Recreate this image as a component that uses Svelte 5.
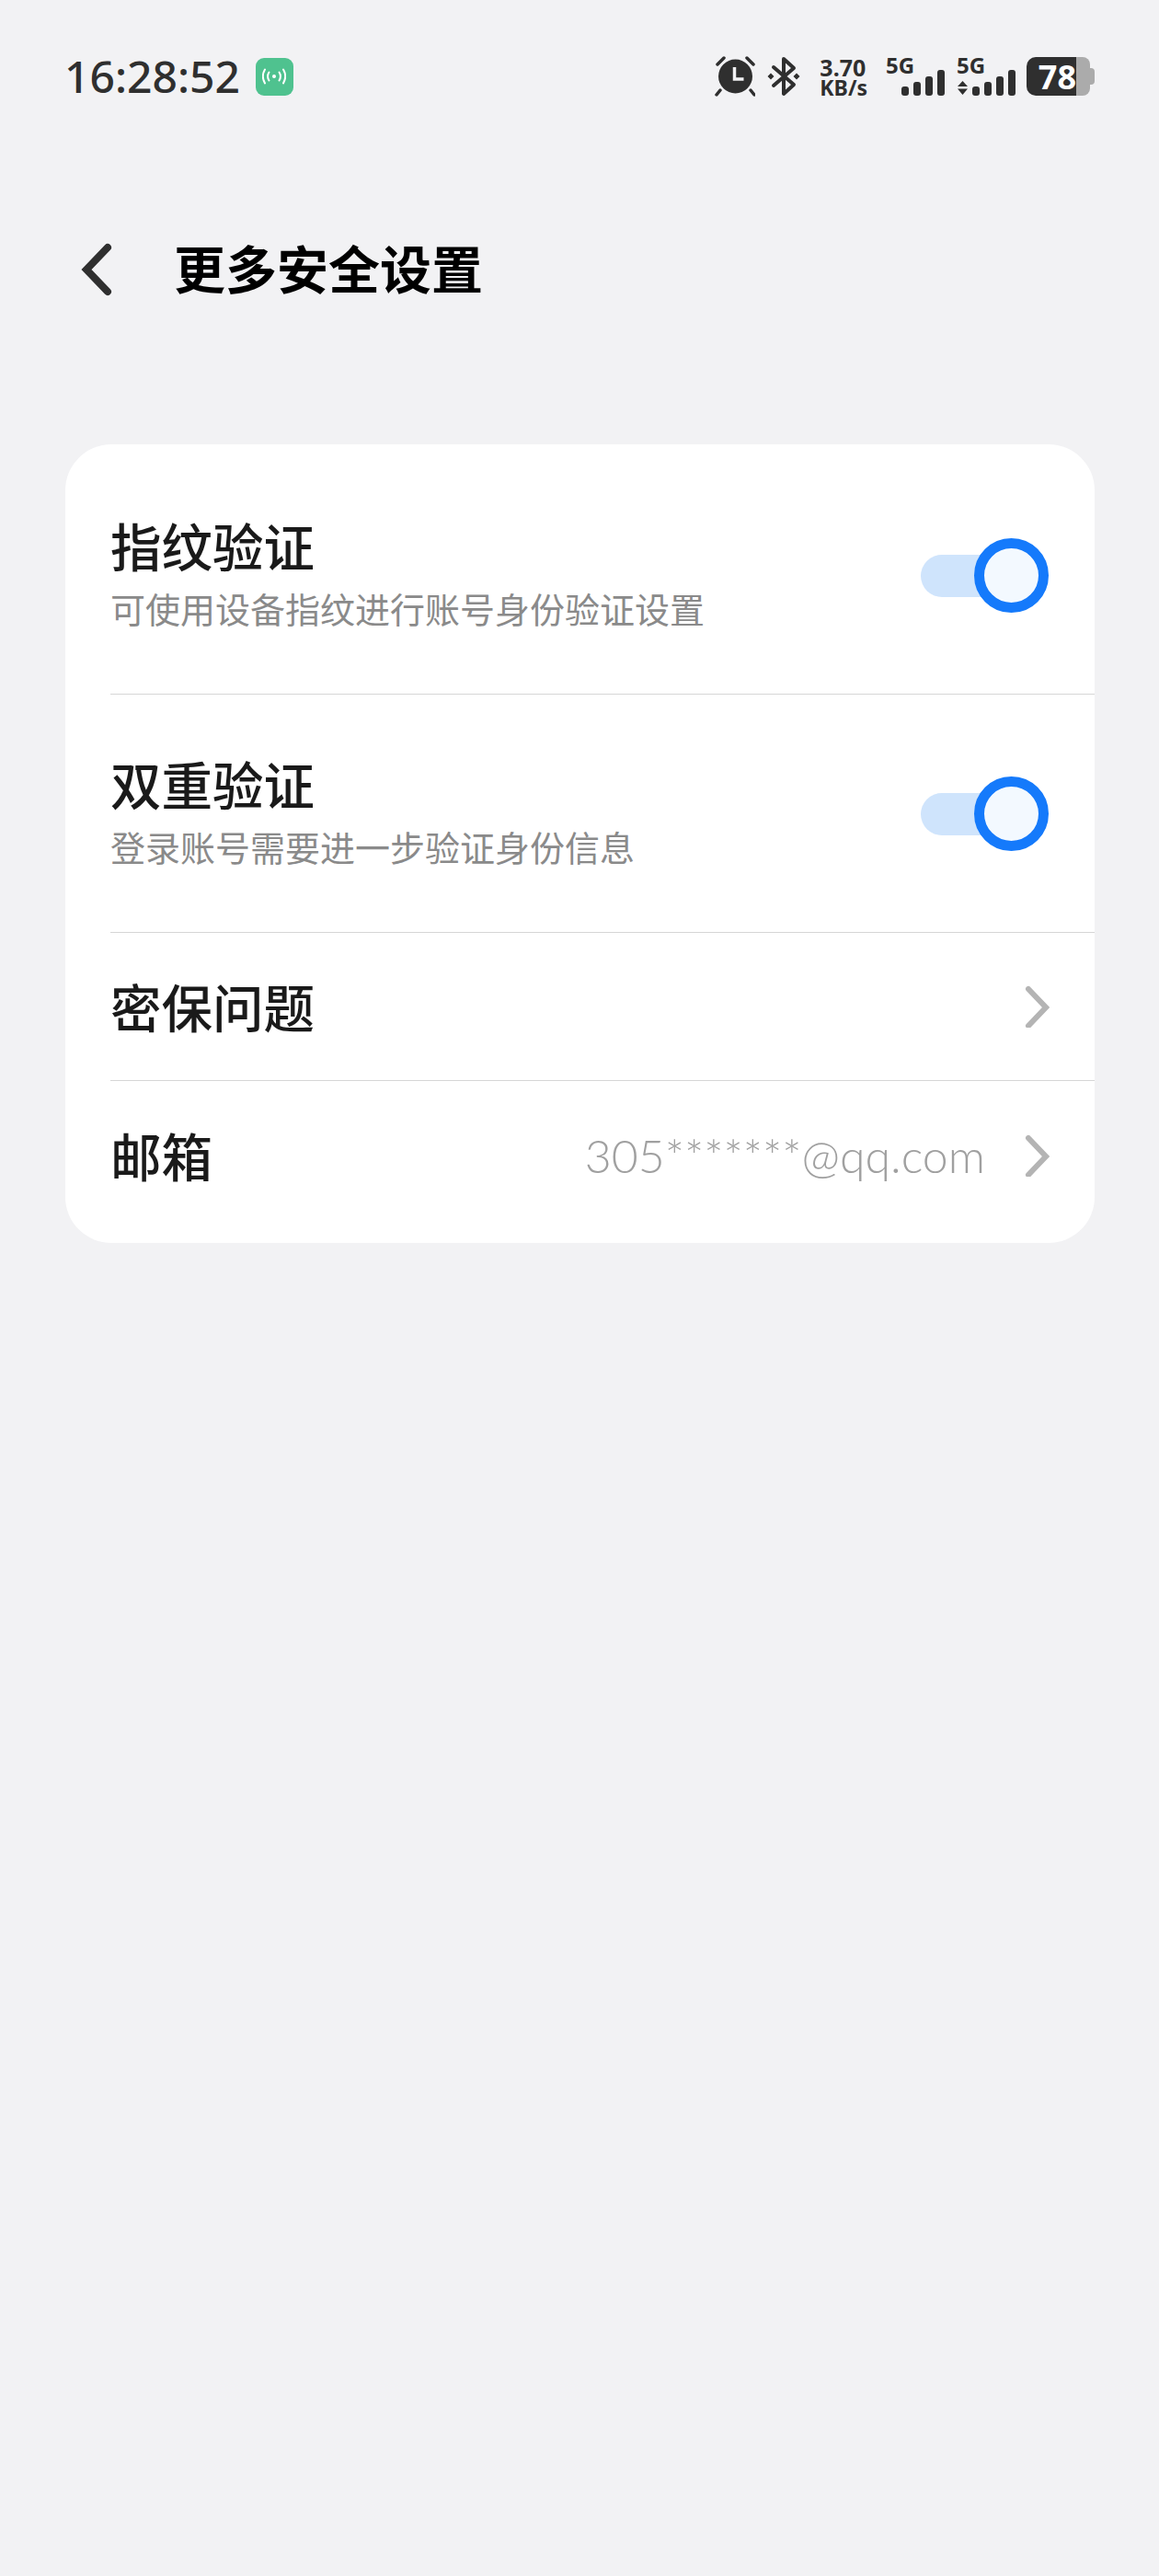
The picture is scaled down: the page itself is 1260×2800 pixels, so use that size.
<script>
  // signal bar heights, tallest last
  const barHeights = [10, 15, 21, 28];

  const rows = [
    { title: "指纹验证", sub: "可使用设备指纹进行账号身份验证设置", toggle: true },
    { title: "双重验证", sub: "登录账号需要进一步验证身份信息", toggle: true },
    { title: "密保问题" },
    { title: "邮箱", value: "305*******@qq.com" }
  ];
</script>

<div class="page">
  <div class="status">
    <span class="time">16:28:52</span>
    <span class="hotspot">
      <svg width="26" height="18" viewBox="0 0 26 18" fill="none" stroke="#fff" stroke-width="2" stroke-linecap="round">
        <circle cx="13" cy="9" r="2" fill="#fff" stroke="none" />
        <path d="M7.500 4.500c-1.800 2.800-1.800 6.200 0 9M18.500 4.500c1.800 2.800 1.800 6.200 0 9" />
        <path d="M3 1.500c-2.800 4.800-2.800 10.200 0 15M23 1.500c2.800 4.800 2.800 10.200 0 15" />
      </svg>
    </span>

    <div class="status-right">
      <svg class="alarm" width="44" height="44" viewBox="0 0 44 44">
        <circle cx="22.500" cy="22" r="18.500" fill="#2f2f2f" />
        <path d="M21.500 12v13h10" fill="none" stroke="#f2f2f4" stroke-width="3.500" />
        <path d="M3 9l7-7M42 9l-7-7M6 37l-4 5M39 37l4 5" fill="none" stroke="#2f2f2f" stroke-width="3.500" stroke-linecap="round" />
      </svg>

      <svg class="bt" width="36" height="44" viewBox="0 0 36 44" fill="#2f2f2f">
        <path d="M7 12 29 31 18 41V3l11 10L7 32" fill="none" stroke="#2f2f2f" stroke-width="4" stroke-linejoin="round" stroke-linecap="round" />
        <path d="M4 18.500 7.500 22 4 25.500 .5 22zM32 18.500 35.500 22 32 25.500 28.500 22z" />
      </svg>

      <div class="speed">
        <span class="speed-num">3.70</span>
        <span class="speed-unit">KB/s</span>
      </div>

      <div class="signal first">
        <span class="net">5G</span>
        <div class="bars">
          {#each barHeights as h}
            <i style="height: {h}px"></i>
          {/each}
        </div>
      </div>

      <div class="signal second">
        <span class="net">5G</span>
        <svg class="updown" width="11" height="15" viewBox="0 0 11 15" fill="#2f2f2f">
          <path d="M5.500 0 11 6H0zM0 8.500h11L5.500 15z" />
        </svg>
        <div class="bars">
          {#each barHeights as h}
            <i style="height: {h}px"></i>
          {/each}
        </div>
      </div>

      <div class="battery">
        <div class="battery-fill"><span>78</span></div>
        <div class="battery-rest"></div>
        <div class="battery-nub"></div>
      </div>
    </div>
  </div>

  <header class="header">
    <svg width="36" height="58" viewBox="0 0 36 58" fill="none" stroke="#2f2f2f" stroke-width="8" stroke-linecap="round" stroke-linejoin="miter">
      <path d="M30 5 7 29l23 24" />
    </svg>
    <h1>更多安全设置</h1>
  </header>

  <section class="card">
    {#each rows as row}
      <div class="row" class:tall={row.toggle}>
        <div class="row-text">
          <div class="row-title">{row.title}</div>
          {#if row.sub}
            <div class="row-sub">{row.sub}</div>
          {/if}
        </div>

        {#if row.toggle}
          <div class="switch"><div class="knob"></div></div>
        {:else}
          {#if row.value}
            <span class="row-value">{row.value}</span>
          {/if}
          <svg class="chevron" width="28" height="46" viewBox="0 -1 28 46" fill="none" stroke="#b4b4b4" stroke-width="6" stroke-linecap="round">
            <path d="M5 3l19 20L5 43" />
          </svg>
        {/if}
      </div>
    {/each}
  </section>
</div>

<style>
  :global(body) {
    margin: 0;
    background: #f2f2f4;
  }

  .page {
    min-height: 2800px;
    background: #f2f2f4;
    font-family: "Noto Sans CJK SC", "Noto Sans", sans-serif;
    color: #1a1a1a;
  }

  /* Status bar */
  .status {
    height: 166px;
    padding: 0 70px 0 70px;
    display: flex;
    align-items: center;
  }

  .time {
    font-family: "Noto Sans", sans-serif;
    font-size: 48px;
    font-weight: 500;
    color: #2f2f2f;
    line-height: 1;
  }

  .hotspot {
    width: 41px;
    height: 41px;
    margin-left: 17px;
    background: #4fc28f;
    border-radius: 9px;
    display: flex;
    align-items: center;
    justify-content: center;
  }

  .status-right {
    margin-left: auto;
    display: flex;
    align-items: center;
    color: #2f2f2f;
  }

  .alarm { margin-right: 13px; }
  .bt { margin-right: 21px; }

  .speed {
    display: flex;
    flex-direction: column;
    margin-right: 20px;
    font-family: "Noto Sans", sans-serif;
    font-weight: 700;
  }

  .speed-num { font-size: 25px; line-height: 24px; }
  .speed-unit { font-size: 23px; line-height: 20px; }

  .signal {
    height: 42px;
    display: grid;
    grid-template: 1fr / 1fr;
  }

  .signal.first { width: 64px; margin-right: 13px; }
  .signal.second { width: 64px; margin-right: 12px; }

  .signal > * { grid-area: 1 / 1; }

  .net {
    font-family: "Noto Sans", sans-serif;
    font-size: 24px;
    font-weight: 700;
    line-height: 18px;
    justify-self: start;
    align-self: start;
  }

  .updown {
    justify-self: start;
    align-self: end;
    margin-left: 1px;
    margin-bottom: 1px;
  }

  .bars {
    display: flex;
    align-items: flex-end;
    justify-content: flex-end;
    gap: 5px;
    align-self: end;
  }

  .bars i {
    display: block;
    width: 8px;
    border-radius: 3px;
    background: #2f2f2f;
  }

  .battery {
    display: flex;
    align-items: center;
    height: 42px;
  }

  .battery-fill {
    width: 54px;
    height: 42px;
    background: #2f2f2f;
    border-radius: 10px 0 0 10px;
    display: flex;
    align-items: center;
    justify-content: flex-end;
    color: #fff;
    font-family: "Noto Sans", sans-serif;
    font-size: 36px;
    font-weight: 700;
  }

  .battery-rest {
    width: 15px;
    height: 42px;
    background: #ababab;
    border-radius: 0 8px 8px 0;
  }

  .battery-nub {
    width: 5px;
    height: 18px;
    background: #ababab;
    border-radius: 0 4px 4px 0;
  }

  /* Title */
  .header {
    height: 254px;
    padding-left: 87px;
    display: flex;
    align-items: center;
  }

  h1 {
    margin: 0 0 6px 66px;
    font-size: 56px;
    font-weight: 700;
    color: #000;
    line-height: 1;
  }

  /* Card */
  .card {
    margin: 63px 70px 0 71px;
    padding: 13px 0 15px;
    background: #fff;
    border-radius: 50px;
  }

  .row {
    height: 160px;
    margin-left: 49px;
    padding-right: 49px;
    display: flex;
    align-items: center;
    border-bottom: 1px solid #d6d6d6;
  }

  .row.tall { height: 258px; }
  .row:last-child { border-bottom: none; height: 161px; }

  .row-text { flex: 1; margin-bottom: 2px; }
  .tall .row-text { margin-bottom: 14px; }

  .row-title {
    font-size: 55.500px;
    font-weight: 500;
    line-height: 86px;
  }

  .row-sub {
    font-size: 38px;
    color: #8a8a8a;
    line-height: 52px;
  }

  .row-value {
    margin-right: 42px;
    font-family: "Lato", "Noto Sans", sans-serif;
    font-size: 50px;
    font-weight: 300;
    color: #a0a0a0;
  }

  /* Switch */
  .switch {
    position: relative;
    width: 121px;
    height: 46px;
    margin: 2px 19px 0 0;
    background: #cfe4fc;
    border-radius: 23px;
  }

  .knob {
    position: absolute;
    top: -18px;
    right: -18px;
    width: 59px;
    height: 59px;
    border: 11px solid #157afb;
    border-radius: 50%;
    background: #f3f9ff;
  }
</style>
